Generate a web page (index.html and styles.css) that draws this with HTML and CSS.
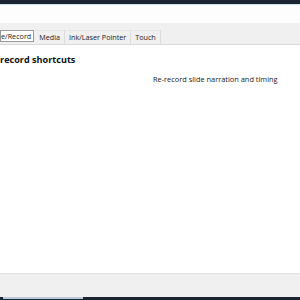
FILE: index.html
```html
<!DOCTYPE html>
<html lang="en">
<head>
    <meta charset="UTF-8">
    <title>Keyboard Shortcuts</title>
    <link rel="stylesheet" href="styles.css">
</head>
<body>
    <div class="window">
        <div class="titlebar"></div>
        <div class="header"></div>

        <div class="tabstrip">
            <div class="tab active">e/Record</div>
            <div class="tab">Media</div>
            <div class="tab">Ink/Laser Pointer</div>
            <div class="tab">Touch</div>
        </div>

        <div class="content">
            <h2>record shortcuts</h2>
            <div class="row">
                <span class="desc">Re-record slide narration and timing</span>
            </div>
        </div>

        <div class="footer"></div>
        <div class="taskbar">
            <div class="task"></div>
        </div>
    </div>
</body>
</html>
```

FILE: styles.css
```css
html, body {
    margin: 0;
    padding: 0;
}

body {
    font-family: "Open Sans", "Noto Sans", sans-serif;
    color: #1a1a1a;
    background-color: #fff;
}

.window {
    display: flex;
    flex-direction: column;
    height: 300px;
    overflow: hidden;
}

.titlebar {
    height: 4px;
    background-color: #1b2431;
    border-bottom: 1px solid #cfe2ec;
}

.header {
    height: 18px;
    background-color: #fdfdfd;
}

.tabstrip {
    display: flex;
    align-items: flex-end;
    height: 22px;
    background-color: #f0f0f0;
    border-bottom: 1px solid #dadada;
    box-sizing: border-box;
}

.tab {
    font-size: 7.2px;
    line-height: 12px;
    padding: 0 4px;
    height: 14px;
    box-sizing: border-box;
    border-right: 1px solid #dcdcdc;
    border-top: 1px solid #e6e6e6;
    color: #222;
}

.tab.active {
    background-color: #fff;
    border: 1px solid #9a9a9a;
    height: 12px;
    margin: 0 1px 2px 0;
    line-height: 10px;
    padding: 0 2px 0 0;
}

.content {
    flex: 1;
    background-color: #fff;
    padding-top: 9px;
}

h2 {
    margin: 0;
    font-size: 9.1px;
    font-weight: bold;
    line-height: 12px;
    color: #111;
}

.row {
    padding: 5px 0 0 153px;
    line-height: 11px;
}

.desc {
    font-size: 7.4px;
    line-height: 11px;
    color: #222;
}

.footer {
    height: 23px;
    background-color: #f0f0f0;
    border-top: 1px solid #e2e2e2;
}

.taskbar {
    height: 3px;
    background-color: #1b2431;
}

.task {
    width: 80px;
    height: 2px;
    margin-left: 3px;
    background-color: #b6cad8;
}
```
